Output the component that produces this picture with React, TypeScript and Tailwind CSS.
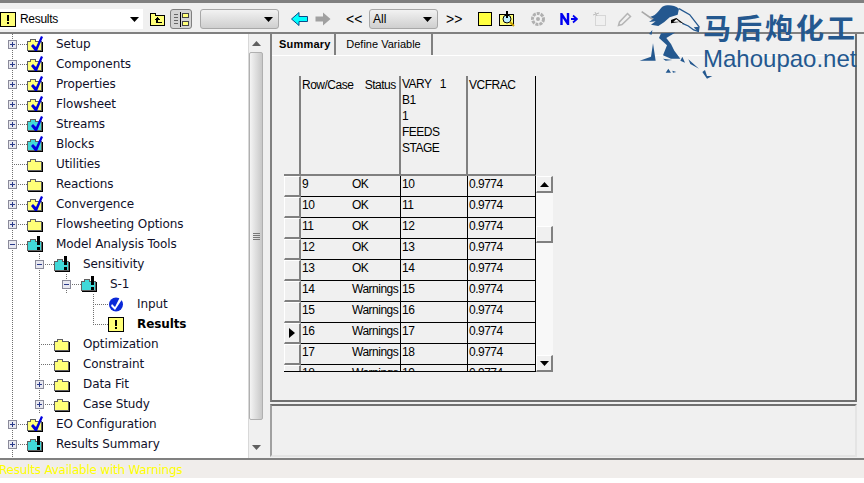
import type { ReactNode } from "react";

type IconKind = "check" | "cyanCheck" | "plain" | "alert" | "input" | "results";

type TreeRow = {
  label: string;
  icon: IconKind;
  // one entry per indent column: "line" keeps the parent's dotted line going
  guides?: Array<"line" | "none">;
  node: "plus" | "minus" | "tee" | "ell";
  bold?: boolean;
};

const treeRows: TreeRow[] = [
  { label: "Setup", icon: "check", node: "plus" },
  { label: "Components", icon: "check", node: "plus" },
  { label: "Properties", icon: "check", node: "plus" },
  { label: "Flowsheet", icon: "check", node: "plus" },
  { label: "Streams", icon: "cyanCheck", node: "plus" },
  { label: "Blocks", icon: "cyanCheck", node: "plus" },
  { label: "Utilities", icon: "plain", node: "tee" },
  { label: "Reactions", icon: "plain", node: "plus" },
  { label: "Convergence", icon: "check", node: "plus" },
  { label: "Flowsheeting Options", icon: "plain", node: "plus" },
  { label: "Model Analysis Tools", icon: "alert", node: "minus" },
  { label: "Sensitivity", icon: "alert", node: "minus", guides: ["line"] },
  { label: "S-1", icon: "alert", node: "minus", guides: ["line", "line"] },
  { label: "Input", icon: "input", node: "tee", guides: ["line", "line", "none"] },
  { label: "Results", icon: "results", node: "ell", bold: true, guides: ["line", "line", "none"] },
  { label: "Optimization", icon: "plain", node: "tee", guides: ["line"] },
  { label: "Constraint", icon: "plain", node: "tee", guides: ["line"] },
  { label: "Data Fit", icon: "plain", node: "plus", guides: ["line"] },
  { label: "Case Study", icon: "plain", node: "plus", guides: ["line"] },
  { label: "EO Configuration", icon: "check", node: "plus" },
  { label: "Results Summary", icon: "alert", node: "plus" },
];

const gridRows = [
  ["9", "OK", "10"],
  ["10", "OK", "11"],
  ["11", "OK", "12"],
  ["12", "OK", "13"],
  ["13", "OK", "14"],
  ["14", "Warnings", "15"],
  ["15", "Warnings", "16"],
  ["16", "Warnings", "17"],
  ["17", "Warnings", "18"],
  ["18", "Warnings", "19"],
];

const noteYellow = "#ffff78";

function CheckMark() {
  return <path d="M6 8 L9 11 L14 0 L16 1 L10 15 L8 15 L4 10 Z" fill="#0000e0" />;
}

function TreeIcon({ kind }: { kind: IconKind }) {
  if (kind === "input") {
    return (
      <svg width="16" height="16" viewBox="0 0 16 16" className="shrink-0">
        <circle cx="8" cy="8.5" r="7" fill="#0a28d8" />
        <path d="M4 8 L7 11 L12 1 L15 2 L7 14 L3 10 Z" fill="#ffffff" />
      </svg>
    );
  }
  if (kind === "results") {
    return (
      <svg width="16" height="16" viewBox="0 0 16 16" className="shrink-0" shapeRendering="crispEdges">
        <rect x="0.5" y="1.5" width="15" height="14" fill={noteYellow} stroke="#000" />
        <rect x="7" y="4" width="2" height="6" fill="#000" />
        <rect x="7" y="11" width="2" height="2" fill="#000" />
      </svg>
    );
  }
  const cyan = kind === "cyanCheck" || kind === "alert";
  return (
    <svg width="16" height="16" viewBox="0 0 16 16" className="shrink-0">
      <g shapeRendering="crispEdges">
        <path d="M3.5 3.5 H8.5 V5.5 H14.5 V14.5 H0.5 V5.5 H3.5 Z" fill={cyan ? "#40d8d8" : noteYellow} stroke="#606060" />
        <rect x="15" y="6" width="1" height="10" fill="#000" />
        <rect x="1" y="15" width="15" height="1" fill="#000" />
      </g>
      {(kind === "check" || kind === "cyanCheck") && <CheckMark />}
      {kind === "alert" && (
        <g shapeRendering="crispEdges">
          <rect x="10" y="0" width="3" height="9" fill="#000" />
          <rect x="10" y="11" width="3" height="3" fill="#000" />
        </g>
      )}
    </svg>
  );
}

// one 27px tree column, dotted lines are a drawing so they stay in svg
function TreeCell({ node }: { node: "line" | "none" | "plus" | "minus" | "tee" | "ell" }) {
  const dash = { stroke: "#707070", strokeDasharray: "1 1", shapeRendering: "crispEdges" as const };
  return (
    <svg width="27" height="20" viewBox="0 0 27 20" className="shrink-0">
      {node !== "none" && <line x1="12.5" y1="0" x2="12.5" y2={node === "ell" ? 10 : 20} {...dash} />}
      {node !== "line" && node !== "none" && <line x1="12" y1="10.5" x2="27" y2="10.5" {...dash} />}
      {(node === "plus" || node === "minus") && (
        <g shapeRendering="crispEdges">
          <rect x="8.5" y="6.5" width="8" height="8" fill="#e8e8f0" stroke="#8a8a9a" />
          <rect x="10" y="10" width="5" height="1" fill="#2a3a8a" />
          {node === "plus" && <rect x="12" y="8" width="1" height="5" fill="#2a3a8a" />}
        </g>
      )}
    </svg>
  );
}

function Caret({ className }: { className?: string }) {
  return (
    <svg width="9" height="5" viewBox="0 0 9 5" className={className}>
      <path d="M0 0 H9 L4.5 5 Z" fill="#000" />
    </svg>
  );
}

function Combo({ width, children }: { width: string; children?: ReactNode }) {
  return (
    <div className={`${width} h-[20px] flex items-center justify-between pl-[3px] pr-[5px] rounded-[3px] border border-[#a8a8a8] bg-gradient-to-b from-[#f2f2f2] to-[#cfcfcf] shrink-0`}>
      <span className="text-[12px]">{children}</span>
      <Caret />
    </div>
  );
}

function Toolbar() {
  return (
    <div className="h-[34px] shrink-0 flex items-center pt-[3px] bg-[#f0f0f0] border-t-[3px] border-b-[2px] border-[#808080] font-['Liberation_Sans',sans-serif] text-black">
      <div className="w-[143px] h-[20px] bg-white flex items-center shrink-0 pr-[4px]">
        <TreeIcon kind="results" />
        <span className="ml-[4px] text-[12px] tracking-[-0.3px] flex-1">Results</span>
        <Caret />
      </div>
      <svg width="17" height="15" viewBox="0 0 17 15" className="ml-[6px] shrink-0" shapeRendering="crispEdges">
        <path d="M1.5 1.5 H6.5 V3.5 H15.5 V13.5 H1.5 Z" fill={noteYellow} stroke="#000" />
        <path d="M8 5 L5 8 H7 V11 H13 V10 H9 V8 H11 Z" fill="#000" />
      </svg>
      <div className="ml-[4px] w-[22px] h-[20px] rounded-[3px] border border-[#808080] bg-[#d4d4d4] flex items-center justify-center shrink-0">
        <svg width="15" height="15" viewBox="0 0 15 15" shapeRendering="crispEdges">
          <rect x="0" y="2" width="4" height="1" fill="#666" />
          <rect x="0" y="5" width="4" height="1" fill="#666" />
          <rect x="0" y="8" width="4" height="1" fill="#666" />
          <rect x="0" y="11" width="4" height="1" fill="#666" />
          <rect x="6" y="0" width="1" height="15" fill="#000" />
          <rect x="8.5" y="1.5" width="6" height="4" fill={noteYellow} stroke="#444" />
          <rect x="8.5" y="9.5" width="6" height="4" fill={noteYellow} stroke="#444" />
        </svg>
      </div>
      <div className="ml-[8px]">
        <Combo width="w-[79px]" />
      </div>
      <svg width="17" height="14" viewBox="0 0 17 14" className="ml-[12px] shrink-0">
        <path d="M0.5 7 L8 0.5 V4.5 H16.5 V9.5 H8 V13.5 Z" fill="#00ffff" stroke="#0a4a8a" />
      </svg>
      <svg width="16" height="14" viewBox="0 0 16 14" className="ml-[7px] shrink-0">
        <path d="M15.5 7 L8 0.5 V4.5 H0.5 V9.5 H8 V13.5 Z" fill="#a0a0a0" />
      </svg>
      <span className="ml-[15px] w-[16px] text-[14px] leading-none whitespace-nowrap shrink-0">{"<<"}</span>
      <div className="ml-[7px]">
        <Combo width="w-[69px]">All</Combo>
      </div>
      <span className="ml-[8px] w-[16px] text-[14px] leading-none whitespace-nowrap shrink-0">{">>"}</span>
      <svg width="14" height="14" viewBox="0 0 14 14" className="ml-[16px] shrink-0" shapeRendering="crispEdges">
        <rect x="0.5" y="0.5" width="13" height="13" fill="#ffff40" stroke="#000" />
      </svg>
      <svg width="16" height="16" viewBox="0 0 16 16" className="ml-[7px] shrink-0">
        <rect x="0.5" y="3.5" width="14" height="11" fill={noteYellow} stroke="#000" />
        <circle cx="8" cy="8" r="4" fill="#bfefff" stroke="#000" />
        <rect x="7" y="0" width="2" height="7" fill="#000" />
        <path d="M11 11 L15 15" stroke="#c8a000" strokeWidth="2" />
      </svg>
      <svg width="16" height="16" viewBox="0 0 16 16" className="ml-[15px] shrink-0">
        <circle cx="8" cy="8" r="5.5" fill="none" stroke="#b0b0b0" strokeWidth="3" strokeDasharray="3 1" />
        <circle cx="8" cy="8" r="2" fill="#b0b0b0" />
      </svg>
      <svg width="18" height="12" viewBox="0 0 18 12" className="ml-[14px] shrink-0">
        <path d="M1.5 12 V1 L8 11 V0" fill="none" stroke="#0000f0" strokeWidth="2.4" />
        <path d="M11 6 H16 M13 2.5 L17 6 L13 9.5" fill="none" stroke="#0000f0" strokeWidth="1.8" />
      </svg>
      <svg width="14" height="14" viewBox="0 0 14 14" className="ml-[15px] shrink-0">
        <rect x="2.5" y="3.5" width="10" height="10" fill="none" stroke="#bdbdbd" strokeDasharray="1 1" />
        <path d="M2 0 L4 4 M0 3 L6 1" stroke="#bdbdbd" />
      </svg>
      <svg width="15" height="15" viewBox="0 0 15 15" className="ml-[10px] shrink-0">
        <path d="M1.5 13.5 L2.5 10 L10.5 1.5 L13.5 4.5 L5 12.5 Z" fill="none" stroke="#b4b4b4" strokeWidth="1.5" />
      </svg>
    </div>
  );
}

function TreePane() {
  return (
    <div className="w-[263px] shrink-0 flex bg-white">
      <div className="w-[248px] overflow-hidden font-['DejaVu_Sans',sans-serif] text-[12px] tracking-[-0.1px] text-[#10102a]">
        {treeRows.map((row) => (
          <div key={row.label + row.icon + row.node} className="h-[20px] flex items-center">
            {(row.guides ?? []).map((g, i) => (
              <TreeCell key={i} node={g} />
            ))}
            <TreeCell node={row.node} />
            <TreeIcon kind={row.icon} />
            <span className={`ml-[13px] whitespace-nowrap ${row.bold ? "font-bold text-black" : ""}`}>{row.label}</span>
          </div>
        ))}
        <TreeCell node="line" />
      </div>
      <div className="w-[15px] flex flex-col items-center bg-[#f0f0f0] border-l border-[#d8d8d8]">
        <div className="h-[18px] flex items-center justify-center">
          <Caret className="rotate-180 opacity-60" />
        </div>
        <div className="w-[14px] h-[368px] rounded-[2px] border border-[#b0b0b0] bg-gradient-to-r from-[#f4f4f4] to-[#c8c8c8] flex flex-col items-center justify-center gap-[1px]">
          <div className="w-[7px] h-px bg-[#777]" />
          <div className="w-[7px] h-px bg-[#777]" />
          <div className="w-[7px] h-px bg-[#777]" />
          <div className="w-[7px] h-px bg-[#777]" />
        </div>
        <div className="flex-1 flex items-end justify-center pb-[8px]">
          <Caret className="opacity-60" />
        </div>
      </div>
    </div>
  );
}

const gridCols = "grid grid-cols-[17px_100px_67px_68px]";
const headCell = "border-r-[2px] border-b-[2px] border-[#808080] bg-[#f0f0f0]";
const bodyCell = "border-r border-b border-black pl-[1px] pt-[1px] leading-[14px] whitespace-nowrap overflow-hidden";

function ScrollButton({ up }: { up?: boolean }) {
  return (
    <div className="w-[17px] h-[17px] flex items-center justify-center bg-[#f0f0f0] border-t border-l border-white border-r-[2px] border-b-[2px] border-r-[#808080] border-b-[#808080] shrink-0">
      {up !== undefined && <Caret className={up ? "rotate-180" : ""} />}
    </div>
  );
}

function ResultGrid() {
  return (
    <div className="mt-[20px] ml-[12px] flex items-start font-['Liberation_Sans',sans-serif] text-[12px] tracking-[-0.5px] text-black">
      <div className="w-[252px] h-[296px] overflow-hidden border-b border-black">
        <div className={`${gridCols} h-[100px]`}>
          <div className={headCell} />
          <div className={`${headCell} pl-[1px] whitespace-pre`}>Row/Case    Status</div>
          <div className={`${headCell} pl-[1px] leading-[16px] whitespace-pre`}>
            {"VARY   1\nB1\n1\nFEEDS\nSTAGE"}
          </div>
          <div className="border-r border-r-black border-b-[2px] border-b-[#808080] pl-[1px]">VCFRAC</div>
        </div>
        {gridRows.map((row) => (
          <div key={row[0]} className={`${gridCols} h-[21px]`}>
            <div className="border-r-[2px] border-b-[2px] border-r-[#808080] border-b-[#808080] border-t border-l border-t-white border-l-white flex items-center justify-center">
              {row[0] === "16" && (
                <svg width="6" height="10" viewBox="0 0 6 10">
                  <path d="M0 0 L6 5 L0 10 Z" fill="#000" />
                </svg>
              )}
            </div>
            <div className={`${bodyCell} flex`}>
              <span className="w-[50px]">{row[0]}</span>
              <span>{row[1]}</span>
            </div>
            <div className={bodyCell}>{row[2]}</div>
            <div className={bodyCell}>0.9774</div>
          </div>
        ))}
      </div>
      <div className="mt-[100px] h-[196px] w-[17px] flex flex-col bg-[#f8f8f8]">
        <ScrollButton up />
        <div className="h-[33px] shrink-0" />
        <ScrollButton />
        <div className="flex-1" />
        <ScrollButton up={false} />
      </div>
    </div>
  );
}

function HorseLogo() {
  return (
    <div className="absolute left-[638px] top-[2px] w-[226px] h-[80px] pointer-events-none">
      <svg width="80" height="82" viewBox="0 0 240 246" className="absolute left-[-3px] top-[-2px]">
        <path d="M20 35 L56 60" stroke="#a8a8a8" strokeWidth="5" />
        {/* mane */}
        <path
          d="M46 50 C66 46 74 26 82 20 C96 14 116 14 132 26 L128 44 L104 52 L88 66 L70 78 L48 74 L62 64 L42 66 L56 56 Z"
          fill="#24588f"
        />
        {/* head outline */}
        <path d="M132 26 L164 44 L192 80 L190 94 L176 90 L160 78 L142 70" fill="none" stroke="#24588f" strokeWidth="4" />
        <path d="M176 82 L192 80 L190 96 Z" fill="#24588f" />
        {/* body and legs */}
        <path d="M78 100 L120 98 L94 114 L108 132 L118 152 L136 176 L108 176 L84 166 L96 136 L72 114 Z" fill="#24588f" />
        <path d="M14 182 L48 170 L54 130 L62 182 Z" fill="#24588f" />
        <path d="M84 176 L112 180 L92 182 Z M142 170 L150 188 L136 182 Z M160 178 L192 206 L166 192 Z M92 218 L100 206 L108 218 Z M112 212 L124 216 L114 218 Z M202 216 L210 210 L216 228 L232 228 L216 236 Z M42 102 L52 90 L50 104 Z" fill="#24588f" />
        {/* toolbar arrow showing through */}
        <path d="M108 70 L108 60 L124 54 L148 72 L132 66 Z" fill="#000" />
        <path d="M115 65 L124 58 L134 65 Z" fill="#fff" />
      </svg>
      <div className="absolute left-[65px] top-[10px] text-[28px] leading-[30px] font-bold tracking-[3px] whitespace-nowrap text-[#24588f] font-['Noto_Sans_CJK_SC',sans-serif]">
        马后炮化工
      </div>
      <div className="absolute left-[65px] top-[43px] text-[24px] leading-[28px] whitespace-nowrap text-[#24588f] font-['Liberation_Sans',sans-serif]">
        Mahoupao.net
      </div>
    </div>
  );
}

function RightPane() {
  return (
    <div className="flex-1 flex flex-col min-w-0 pl-[7px] pr-[7px] bg-[#f0f0f0]">
      <div className="h-[368px] flex flex-col border-l-[2px] border-l-[#808080] border-r-[2px] border-r-[#707070] border-b-[2px] border-b-[#707070]">
        <div className="h-[22px] flex items-end border-b border-white font-['Liberation_Sans',sans-serif] text-[11px] text-black">
          <div className="w-[64px] h-[21px] pl-[7px] flex items-center font-bold tracking-[0.2px] border-r-[2px] border-[#808080]">Summary</div>
          <div className="w-[97px] h-[21px] flex items-center justify-center border-r-[2px] border-[#808080]">Define Variable</div>
        </div>
        <ResultGrid />
      </div>
      <div className="mt-[2px] h-[53px] border-t-[2px] border-t-[#707070] border-b-[2px] border-r-[2px] border-b-[#e4e4e4] border-r-[#e4e4e4] border-l-[2px] border-l-[#a0a0a0]" />
    </div>
  );
}

export default function App() {
  return (
    <div className="relative w-[864px] h-[483px] overflow-hidden flex flex-col bg-[#f0f0f0]">
      <Toolbar />
      <div className="flex-1 min-h-0 flex">
        <TreePane />
        <RightPane />
      </div>
      <div className="h-[20px] shrink-0 border-t-[2px] border-[#808080] bg-[#f0edeb] overflow-hidden font-['DejaVu_Sans',sans-serif] text-[12px] leading-[20px] tracking-[-0.22px] text-[#ffff00]">
        <span className="ml-[-1px] inline-block">Results Available with Warnings</span>
      </div>
      <div className="h-[5px] shrink-0 bg-white" />
      <HorseLogo />
    </div>
  );
}
